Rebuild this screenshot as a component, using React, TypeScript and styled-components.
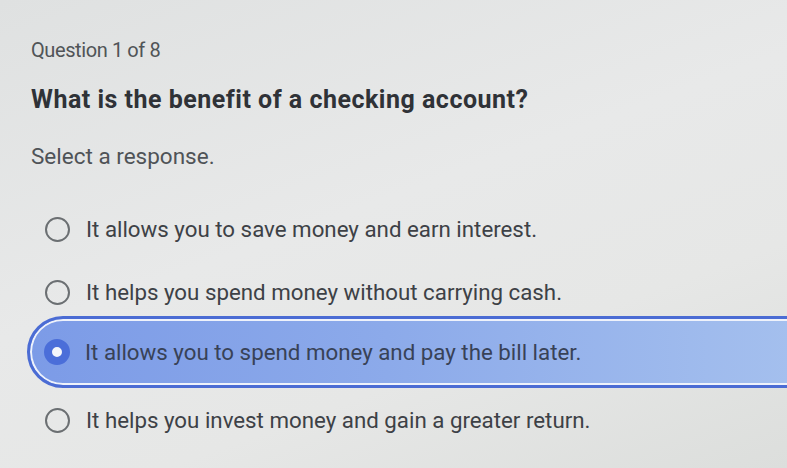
import React from 'react';
import styled, { createGlobalStyle } from 'styled-components';

const GlobalStyle = createGlobalStyle`
  html, body {
    margin: 0;
    padding: 0;
    overflow: hidden;
  }
  body {
    font-family: Roboto, "Liberation Sans", sans-serif;
    background: linear-gradient(160deg, #dfe1e1 0%, #e8e9e9 45%, #e6e7e6 70%, #dcdedc 100%);
    width: 787px;
    height: 468px;
  }
`;

const Page = styled.div`
  padding: 38px 0 0 31px;
`;

const Counter = styled.div`
  font-size: 20px;
  line-height: 24px;
  color: #505457;
  letter-spacing: -0.4px;
`;

const Prompt = styled.h2`
  margin: 23px 0 0;
  font-size: 25px;
  line-height: 30px;
  font-weight: 700;
  color: #2f3237;
  letter-spacing: 0.5px;
`;

const Hint = styled.div`
  margin-top: 28px;
  font-size: 22.5px;
  line-height: 26px;
  color: #4f5357;
`;

const List = styled.div`
  margin-top: 34px;
  display: flex;
  flex-direction: column;
`;

const Option = styled.div<{ $selected?: boolean }>`
  display: flex;
  align-items: center;
  box-sizing: border-box;
  height: ${(p) => (p.$selected ? '72px' : '52px')};
  margin: ${(p) => (p.$selected ? '-13px -40px 6px -4px' : '0 0 11px 0')};
  padding-left: 14px;
  gap: ${(p) => (p.$selected ? '15px' : '16px')};
  border-radius: ${(p) => (p.$selected ? '36px 0 0 36px' : '0')};
  border: ${(p) => (p.$selected ? '3px solid #4b6cd4' : 'none')};
  background: ${(p) =>
    p.$selected ? 'linear-gradient(90deg, #7c9be7 0%, #8caaea 45%, #a6c1ee 100%)' : 'transparent'};
  box-shadow: ${(p) => (p.$selected ? 'inset 0 0 0 2px #eef2fb' : 'none')};
`;

const Radio = styled.span<{ $selected?: boolean }>`
  flex: none;
  box-sizing: border-box;
  width: ${(p) => (p.$selected ? '26px' : '25px')};
  height: ${(p) => (p.$selected ? '26px' : '25px')};
  border-radius: 50%;
  border: ${(p) => (p.$selected ? '8.5px solid #4b6ed9' : '2px solid #6b6f72')};
  background: ${(p) => (p.$selected ? '#f4f6fb' : 'transparent')};
`;

const Label = styled.span<{ $selected?: boolean }>`
  font-size: 22.3px;
  line-height: 26px;
  color: ${(p) => (p.$selected ? '#384257' : '#3d4146')};
`;

const options = [
  'It allows you to save money and earn interest.',
  'It helps you spend money without carrying cash.',
  'It allows you to spend money and pay the bill later.',
  'It helps you invest money and gain a greater return.',
];

export default function App() {
  const selected = 2;
  return (
    <>
      <GlobalStyle />
      <Page>
        <Counter>Question 1 of 8</Counter>
        <Prompt>What is the benefit of a checking account?</Prompt>
        <Hint>Select a response.</Hint>
        <List>
          {options.map((text, i) => (
            <Option key={text} $selected={i === selected}>
              <Radio $selected={i === selected} />
              <Label $selected={i === selected}>{text}</Label>
            </Option>
          ))}
        </List>
      </Page>
    </>
  );
}
